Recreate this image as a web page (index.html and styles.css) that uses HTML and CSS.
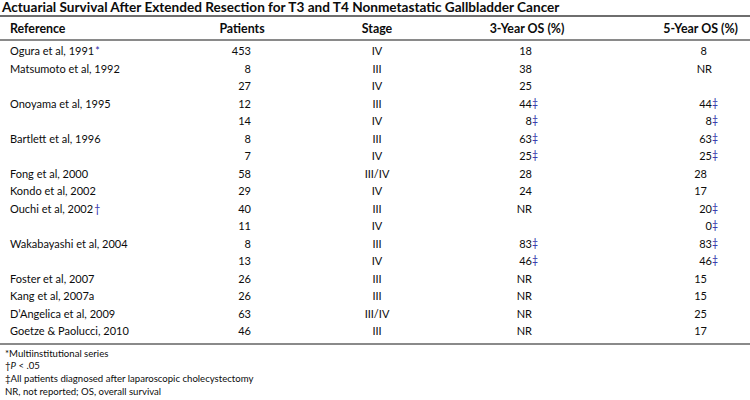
FILE: index.html
```html
<!DOCTYPE html>
<html>
<head>
<meta charset="utf-8">
<link rel="stylesheet" href="styles.css">
</head>
<body>
<div class="page">
  <div class="title">Actuarial Survival After Extended Resection for T3 and T4 Nonmetastatic Gallbladder Cancer</div>
  <div class="grid head">
    <div class="c ref">Reference</div>
    <div class="c pat">Patients</div>
    <div class="c stg">Stage</div>
    <div class="c y3">3-Year OS (%)</div>
    <div class="c y5">5-Year OS (%)</div>
  </div>
  <div class="body">
    <div class="grid row"><div class="c ref">Ogura et al, 1991<span class="mk">*</span></div><div class="c pat">453</div><div class="c stg">IV</div><div class="c y3"><span class="n">18</span></div><div class="c y5"><span class="n p">8</span></div></div>
    <div class="grid row"><div class="c ref">Matsumoto et al, 1992</div><div class="c pat">8</div><div class="c stg">III</div><div class="c y3"><span class="n">38</span></div><div class="c y5"><span class="n">NR</span></div></div>
    <div class="grid row"><div class="c ref"></div><div class="c pat">27</div><div class="c stg">IV</div><div class="c y3"><span class="n">25</span></div><div class="c y5"></div></div>
    <div class="grid row"><div class="c ref">Onoyama et al, 1995</div><div class="c pat">12</div><div class="c stg">III</div><div class="c y3"><span class="n">44</span><span class="d">‡</span></div><div class="c y5"><span class="n">44</span><span class="d">‡</span></div></div>
    <div class="grid row"><div class="c ref"></div><div class="c pat">14</div><div class="c stg">IV</div><div class="c y3"><span class="n">8</span><span class="d">‡</span></div><div class="c y5"><span class="n">8</span><span class="d">‡</span></div></div>
    <div class="grid row"><div class="c ref">Bartlett et al, 1996</div><div class="c pat">8</div><div class="c stg">III</div><div class="c y3"><span class="n">63</span><span class="d">‡</span></div><div class="c y5"><span class="n">63</span><span class="d">‡</span></div></div>
    <div class="grid row"><div class="c ref"></div><div class="c pat">7</div><div class="c stg">IV</div><div class="c y3"><span class="n">25</span><span class="d">‡</span></div><div class="c y5"><span class="n">25</span><span class="d">‡</span></div></div>
    <div class="grid row"><div class="c ref">Fong et al, 2000</div><div class="c pat">58</div><div class="c stg">III/IV</div><div class="c y3"><span class="n">28</span></div><div class="c y5"><span class="n p">28</span></div></div>
    <div class="grid row"><div class="c ref">Kondo et al, 2002</div><div class="c pat">29</div><div class="c stg">IV</div><div class="c y3"><span class="n">24</span></div><div class="c y5"><span class="n p">17</span></div></div>
    <div class="grid row"><div class="c ref">Ouchi et al, 2002<span class="mk">†</span></div><div class="c pat">40</div><div class="c stg">III</div><div class="c y3"><span class="n">NR</span></div><div class="c y5"><span class="n">20</span><span class="d">‡</span></div></div>
    <div class="grid row"><div class="c ref"></div><div class="c pat">11</div><div class="c stg">IV</div><div class="c y3"></div><div class="c y5"><span class="n">0</span><span class="d">‡</span></div></div>
    <div class="grid row"><div class="c ref">Wakabayashi et al, 2004</div><div class="c pat">8</div><div class="c stg">III</div><div class="c y3"><span class="n">83</span><span class="d">‡</span></div><div class="c y5"><span class="n">83</span><span class="d">‡</span></div></div>
    <div class="grid row"><div class="c ref"></div><div class="c pat">13</div><div class="c stg">IV</div><div class="c y3"><span class="n">46</span><span class="d">‡</span></div><div class="c y5"><span class="n">46</span><span class="d">‡</span></div></div>
    <div class="grid row"><div class="c ref">Foster et al, 2007</div><div class="c pat">26</div><div class="c stg">III</div><div class="c y3"><span class="n">NR</span></div><div class="c y5"><span class="n p">15</span></div></div>
    <div class="grid row"><div class="c ref">Kang et al, 2007a</div><div class="c pat">26</div><div class="c stg">III</div><div class="c y3"><span class="n">NR</span></div><div class="c y5"><span class="n p">15</span></div></div>
    <div class="grid row"><div class="c ref">D’Angelica et al, 2009</div><div class="c pat">63</div><div class="c stg">III/IV</div><div class="c y3"><span class="n">NR</span></div><div class="c y5"><span class="n p">25</span></div></div>
    <div class="grid row"><div class="c ref">Goetze &amp; Paolucci, 2010</div><div class="c pat">46</div><div class="c stg">III</div><div class="c y3"><span class="n">NR</span></div><div class="c y5"><span class="n p">17</span></div></div>
  </div>
  <div class="notes">
    <div>*Multiinstitutional series</div>
    <div>†<i>P</i> &lt; .05</div>
    <div>‡All patients diagnosed after laparoscopic cholecystectomy</div>
    <div>NR, not reported; OS, overall survival</div>
  </div>
</div>
</body>
</html>
```
FILE: styles.css
```css
html, body {
  margin: 0;
  padding: 0;
  background: #fff;
}
body {
  font-family: Lato, "Open Sans", sans-serif;
  color: #0c0c0c;
  width: 750px;
  height: 400px;
  overflow: hidden;
}
.page {
  display: flex;
  flex-direction: column;
}
.title {
  font-size: 13.6px;
  font-weight: bold;
  line-height: 15px;
  padding-left: 2px;
  height: 15px;
  border-bottom: 2px solid #6e6e6e;
}
.grid {
  display: grid;
  grid-template-columns: 200px 84px 186px 114px 166px;
  align-items: center;
}
.head {
  height: 22px;
  font-weight: bold;
  font-size: 12.4px;
  border-bottom: 2px solid #8a8a8a;
}
.body {
  padding-top: 1px;
  padding-bottom: 3px;
  border-bottom: 2px solid #8a8a8a;
}
.row {
  height: 17.5px;
  font-size: 11px;
}
.c {
  white-space: nowrap;
}
.ref { padding-left: 10px; }
.head .pat, .head .stg, .head .y3 { text-align: center; }
.head .y5 { text-align: right; padding-right: 12px; }
.row .pat { text-align: right; padding-right: 33px; }
.row .stg { text-align: center; }
.row .y3, .row .y5 { display: flex; }
.row .y3 .n { width: 62px; text-align: right; }
.row .y5 .n { width: 128px; text-align: right; }
.row .y5 .n.p { width: 123px; }
.d, .mk {
  color: #2a2aa8;
  font-size: 10.5px;
}
.mk { margin-left: 1px; }
.notes {
  padding-left: 5px;
  padding-top: 3px;
  font-size: 9.6px;
  line-height: 12.7px;
  height: 52px;
  border-bottom: 2px solid #111;
}
```
